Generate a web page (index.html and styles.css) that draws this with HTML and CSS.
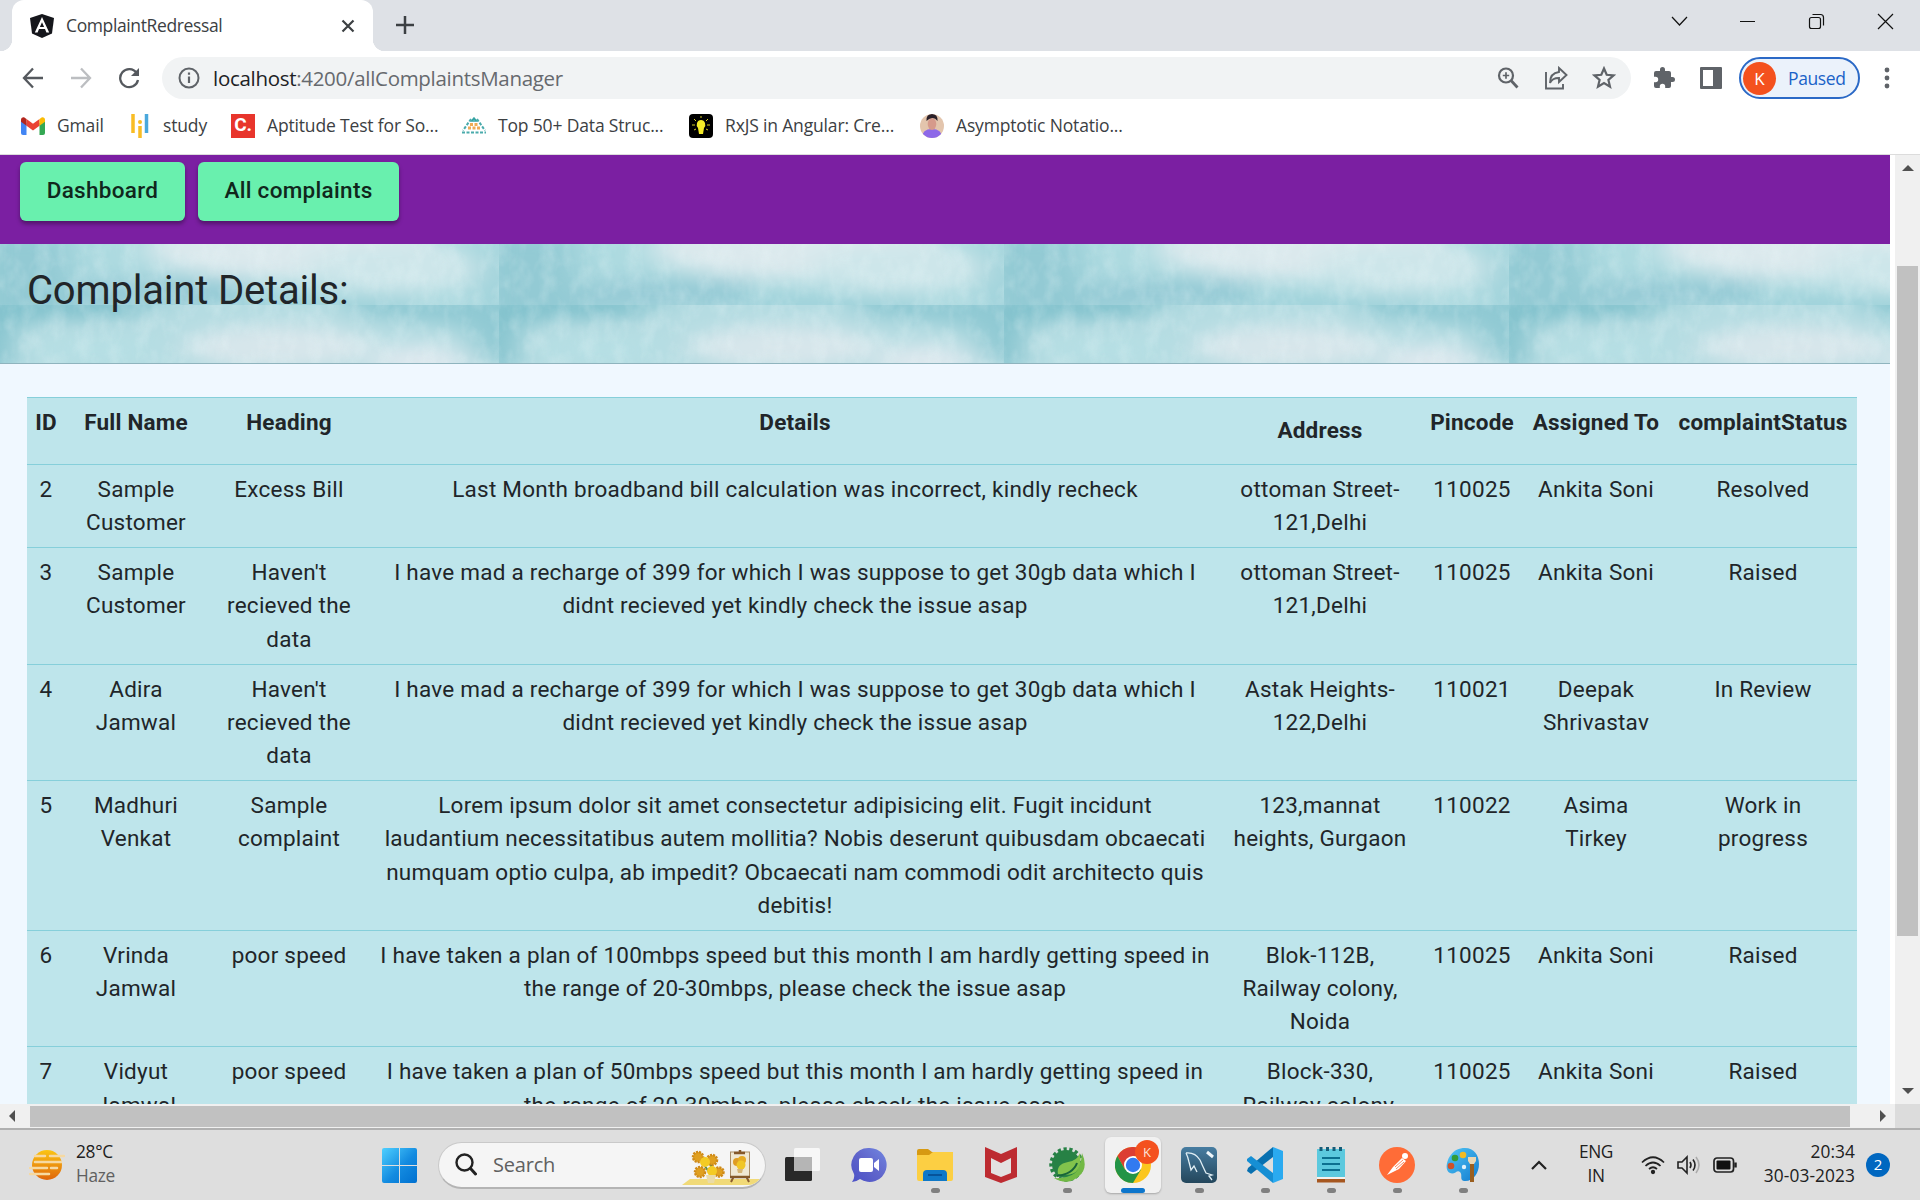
FILE: index.html
```html
<!DOCTYPE html>
<html lang="en">
<head>
<meta charset="utf-8">
<title>ComplaintRedressal</title>
<link rel="stylesheet" href="styles.css">
</head>
<body>
<header class="tabs">
  <div class="tab">
    <svg class="tab-logo" width="24" height="24" viewBox="0 0 24 24"><path d="M12 0l12 4-2 15.500-10 4.500-10-4.500L0 4z" fill="#15161b"/><path d="M12 3L4.800 18.500h2.800L9 15h6l1.400 3.500h2.800zm0 5.300L14.100 13H9.900z" fill="#fff"/></svg>
    <span class="tab-title">ComplaintRedressal</span>
    <svg class="tab-close" width="14" height="14" viewBox="0 0 14 14"><path d="M1.500 1.500l11 11m0-11l-11 11" stroke="#3c4043" stroke-width="2.200"/></svg>
  </div>
  <svg class="tab-new" width="18" height="18" viewBox="0 0 18 18"><path d="M9 0v18M0 9h18" stroke="#3c4043" stroke-width="2.500"/></svg>
  <svg class="win-controls" width="240" height="42" viewBox="0 0 240 42" fill="none" stroke="#111" stroke-width="1.200"><path d="M11 17l7.500 8 7.500-8M79 21.500h15M232 14l-15 15m0-15l15 15"/><rect x="148.500" y="17.500" width="11" height="11" rx="2"/><path d="M151.500 14.500h8q3 0 3 3v8"/></svg>
</header>

<div class="toolbar">
  <svg class="nav-icon" width="22" height="22" viewBox="0 0 22 22"><path d="M21 11H2m9-9.500L2 11l9 9.500" fill="none" stroke="#55595e" stroke-width="2.300"/></svg>
  <svg class="nav-icon" width="22" height="22" viewBox="0 0 22 22"><path d="M1 11h19M11 1.500l9 9.500-9 9.500" fill="none" stroke="#bcbec1" stroke-width="2.300"/></svg>
  <svg class="nav-icon" width="22" height="22" viewBox="0 0 22 22"><path d="M18.600 6A9 9 0 1 0 20 13" fill="none" stroke="#55595e" stroke-width="2.300"/><path d="M21 1v8h-8z" fill="#55595e"/></svg>
  <div class="omnibox">
    <svg width="22" height="22" viewBox="0 0 22 22"><circle cx="11" cy="11" r="9.500" fill="none" stroke="#5f6368" stroke-width="2"/><path d="M11 9.500V16M11 5.500v2.300" stroke="#5f6368" stroke-width="2.200"/></svg>
    <span class="url"><b>localhost</b>:4200/allComplaintsManager</span>
    <svg class="omni-zoom" width="22" height="22" viewBox="0 0 22 22" fill="none" stroke="#5f6368"><circle cx="9" cy="8.500" r="7" stroke-width="2.200"/><path d="M14 13.500l6.500 7" stroke-width="2.800"/><path d="M9 5.300v6.400M5.800 8.500h6.400" stroke-width="1.700"/></svg>
    <svg class="omni-share" width="24" height="24" viewBox="0 0 24 24" fill="none" stroke="#5f6368" stroke-width="1.900"><path d="M2 6v16.500h17V18"/><path d="M15 2l7.500 7-7.500 7v-4q-7 0-9 5 0-10 9-11z"/></svg>
    <svg class="omni-star" width="24" height="24" viewBox="0 0 24 24"><path d="M12 2.500l2.700 6.300 6.900.6-5.200 4.500 1.600 6.700L12 17l-6 3.600 1.600-6.700-5.200-4.500 6.900-.6z" fill="none" stroke="#5f6368" stroke-width="2.200"/></svg>
  </div>
  <svg class="ext" width="24" height="24" viewBox="0 0 24 24"><path d="M20.500 11H19V7a2 2 0 0 0-2-2h-4V3.500a2.500 2.500 0 0 0-5 0V5H4a2 2 0 0 0-2 2v3.800h1.500a2.700 2.700 0 0 1 0 5.400H2V20a2 2 0 0 0 2 2h3.800v-1.500a2.700 2.700 0 0 1 5.400 0V22H17a2 2 0 0 0 2-2v-4h1.500a2.500 2.500 0 0 0 0-5z" fill="#5f6368"/></svg>
  <svg class="panel" width="22" height="22" viewBox="0 0 22 22"><rect width="22" height="22" rx="1" fill="#5f6368"/><rect x="3" y="3" width="10" height="16" fill="#fff"/></svg>
  <div class="profile"><span class="avatar">K</span><span class="paused">Paused</span></div>
  <svg class="dots" width="6" height="22" viewBox="0 0 6 22" fill="#5f6368"><circle cx="3" cy="3" r="2.400"/><circle cx="3" cy="11" r="2.400"/><circle cx="3" cy="19" r="2.400"/></svg>
</div>

<nav class="bookmarks">
  <div class="bm bm1"><svg width="24" height="18" viewBox="0 0 24 18"><path d="M0 3v13q0 2 2 2h3.500V6z" fill="#4285f4"/><path d="M24 3v13q0 2-2 2h-3.500V6z" fill="#34a853"/><path d="M5.500 2v6.800L12 13.500l6.500-4.700V2L12 6.800z" fill="#ea4335"/><path d="M0 3q0-3 3-2.800L5.500 2v6.800L0 4.800z" fill="#b3261e"/><path d="M24 3q0-3-3-2.800L18.500 2v6.800L24 4.800z" fill="#fbbc04"/></svg><span>Gmail</span></div>
  <div class="bm bm2"><svg width="18" height="24" viewBox="0 0 18 24"><path d="M2 0v19M9 12v12" stroke="#f9bd25" stroke-width="3.500"/><circle cx="9" cy="8" r="2" fill="#f9bd25"/><path d="M15.500 0v19" stroke="#4aa8dc" stroke-width="3.500"/></svg><span>study</span></div>
  <div class="bm bm3"><span class="tile-c">C.</span><span>Aptitude Test for So...</span></div>
  <div class="bm bm4"><svg width="24" height="18" viewBox="0 0 24 18"><path d="M12 1l-2.500 3h5z" fill="none" stroke="#35a3a3" stroke-width="1.500"/><path d="M8 7.500h8M6 11h12" stroke="#efaa55" stroke-width="3" stroke-dasharray="3 1.500"/><path d="M9 2L1 13.500M15 2l8 11.500M0 15.500h24" stroke="#4aabac" stroke-width="2" stroke-dasharray="3 1.500"/></svg><span>Top 50+ Data Struc...</span></div>
  <div class="bm bm5"><svg width="24" height="24" viewBox="0 0 24 24"><rect width="24" height="24" rx="4"/><path d="M9 14q-2-2-1-5t4-3 4 3-1 5l-1 6h-4z" fill="#f5ec28"/><path d="M12 2v2M5 5l2 2m12-2l-2 2M3 11h3m12 0h3M5 16l2-1m12 1l-2-1" stroke="#d7cf24"/></svg><span>RxJS in Angular: Cre...</span></div>
  <div class="bm bm6"><svg width="24" height="24" viewBox="0 0 24 24"><defs><clipPath id="face"><circle cx="12" cy="12" r="12"/></clipPath></defs><g clip-path="url(#face)"><rect width="24" height="24" fill="#e3c5ad"/><path d="M2 24q0-9 10-9t10 9z" fill="#8d68e8"/><ellipse cx="12" cy="10" rx="4.300" ry="6" fill="#d69a8b"/><path d="M6.500 7q-.5-7 5.500-7t5.500 7Q15 3.500 12 4T6.500 7z" fill="#2b2029"/></g></svg><span>Asymptotic Notatio...</span></div>
</nav>

<main class="viewport">
  <div class="page">
    <div class="navbar"><button class="btn btn-dash">Dashboard</button><button class="btn btn-all">All complaints</button></div>
    <section class="banner">
      <svg class="banner-art" width="1890" height="119">
        <defs>
          <filter id="soft" x="-50%" y="-50%" width="200%" height="200%"><feGaussianBlur stdDeviation="16 9"/></filter>
          <filter id="grain" x="0" y="0" width="100%" height="100%"><feTurbulence type="fractalNoise" baseFrequency=".07 .045" numOctaves="3" seed="4"/><feColorMatrix values="0 0 0 0 .88  0 0 0 0 .96  0 0 0 0 .97  1.600 0 0 0 -.62"/></filter>
          <pattern id="paint" x="-6" width="505" height="119" patternUnits="userSpaceOnUse">
            <svg width="505" height="61" viewBox="0 0 505 61"><rect width="505" height="61" fill="#addae0"/>
              <g filter="url(#soft)"><path d="M-20-10H70L90 80H-20z" fill="#93cad4"/><path d="M100 35h150v30H70z" fill="#96cbd6"/><ellipse cx="300" cy="5" rx="150" ry="30" fill="#dbe9ed"/><ellipse cx="400" cy="25" rx="90" ry="24" fill="#cde6ea"/><path d="M485 0h30v70h-30zM240 52h180v20H240z" fill="#9fd2da"/></g></svg>
            <svg y="61" width="505" height="58" viewBox="0 0 505 58"><rect width="505" height="58" fill="#b5dce2"/>
              <g filter="url(#soft)"><path d="M-20-10H190L130 12 20 16 10 80h-30z" fill="#80c1cc"/><path d="M350-20H530V60h-35L470 20 360 10z" fill="#8fc9d3"/><ellipse cx="285" cy="42" rx="95" ry="22" fill="#d7e6eb"/><ellipse cx="425" cy="58" rx="50" ry="19" fill="#dce8ee"/><ellipse cx="100" cy="45" rx="65" ry="15" fill="#b6dfe4"/></g></svg>
            <rect width="505" height="119" filter="url(#grain)" opacity=".28"/>
          </pattern>
        </defs>
        <rect width="1890" height="119" fill="url(#paint)"/>
      </svg>
      <h1>Complaint Details:</h1>
    </section>
    <table class="grid">
      <colgroup><col class="c1"><col class="c2"><col class="c3"><col class="c4"><col class="c5"><col class="c6"><col class="c7"><col class="c8"></colgroup>
      <thead><tr><th>ID</th><th>Full Name</th><th>Heading</th><th>Details</th><th class="low">Address</th><th>Pincode</th><th>Assigned To</th><th>complaintStatus</th></tr></thead>
      <tbody>
        <tr><td>2</td><td>Sample<br>Customer</td><td>Excess Bill</td><td>Last Month broadband bill calculation was incorrect, kindly recheck</td><td>ottoman Street-<br>121,Delhi</td><td>110025</td><td>Ankita Soni</td><td>Resolved</td></tr>
        <tr><td>3</td><td>Sample<br>Customer</td><td>Haven't<br>recieved the<br>data</td><td>I have mad a recharge of 399 for which I was suppose to get 30gb data which I<br>didnt recieved yet kindly check the issue asap</td><td>ottoman Street-<br>121,Delhi</td><td>110025</td><td>Ankita Soni</td><td>Raised</td></tr>
        <tr><td>4</td><td>Adira<br>Jamwal</td><td>Haven't<br>recieved the<br>data</td><td>I have mad a recharge of 399 for which I was suppose to get 30gb data which I<br>didnt recieved yet kindly check the issue asap</td><td>Astak Heights-<br>122,Delhi</td><td>110021</td><td>Deepak<br>Shrivastav</td><td>In Review</td></tr>
        <tr><td>5</td><td>Madhuri<br>Venkat</td><td>Sample<br>complaint</td><td>Lorem ipsum dolor sit amet consectetur adipisicing elit. Fugit incidunt<br>laudantium necessitatibus autem mollitia? Nobis deserunt quibusdam obcaecati<br>numquam optio culpa, ab impedit? Obcaecati nam commodi odit architecto quis<br>debitis!</td><td>123,mannat<br>heights, Gurgaon</td><td>110022</td><td>Asima<br>Tirkey</td><td>Work in<br>progress</td></tr>
        <tr><td>6</td><td>Vrinda<br>Jamwal</td><td>poor speed</td><td>I have taken a plan of 100mbps speed but this month I am hardly getting speed in<br>the range of 20-30mbps, please check the issue asap</td><td>Blok-112B,<br>Railway colony,<br>Noida</td><td>110025</td><td>Ankita Soni</td><td>Raised</td></tr>
        <tr><td>7</td><td>Vidyut<br>Jamwal</td><td>poor speed</td><td>I have taken a plan of 50mbps speed but this month I am hardly getting speed in<br>the range of 20-30mbps, please check the issue asap</td><td>Block-330,<br>Railway colony,<br>Noida</td><td>110025</td><td>Ankita Soni</td><td>Raised</td></tr>
      </tbody>
    </table>
  </div>
  <div class="vscroll"><i class="arrow up"></i><div class="vthumb"></div><i class="arrow down"></i></div>
</main>
<div class="hscroll"><i class="arrow left"></i><div class="hthumb"></div><i class="arrow right"></i><div class="corner"></div></div>

<footer class="taskbar">
  <div class="weather">
    <svg width="36" height="32" viewBox="0 0 36 32"><defs><linearGradient id="sun" x2="0" y2="1"><stop stop-color="#fbc513"/><stop offset="1" stop-color="#df650b"/></linearGradient></defs><circle cx="18" cy="16" r="15" fill="url(#sun)"/><path d="M6 7h10m5 0h14M6 13h26M1 19h17m4 0h6M1 25h19" stroke="#f6d9a2" stroke-width="2.500" stroke-linecap="round"/></svg>
    <div class="temp"><span>28°C</span><span class="muted">Haze</span></div>
  </div>
  <svg class="start" width="35" height="35" viewBox="0 0 35 35"><defs><linearGradient id="win" x2="1" y2="1"><stop stop-color="#4fd0ff"/><stop offset=".55" stop-color="#138be0"/><stop offset="1" stop-color="#0070d0"/></linearGradient></defs><path d="M2 0h15v17H0V2q0-2 2-2zM18 0h15q2 0 2 2v15H18zM0 18h17v17H2q-2 0-2-2zM18 18h17v15q0 2-2 2H18z" fill="url(#win)"/></svg>
  <div class="search">
    <svg width="22" height="23" viewBox="0 0 22 23"><circle cx="9.500" cy="9.500" r="8" fill="none" stroke="#222" stroke-width="2.400"/><path d="M15.500 15.500l5 5.500" stroke="#222" stroke-width="3" stroke-linecap="round"/></svg>
    <span>Search</span>
    <svg class="art" width="78" height="40" viewBox="0 0 78 40"><path d="M8 32h70q-5 6-12 6H0z" fill="#f1da78"/><g stroke="#5d8a45" stroke-width="2"><path d="M29 28L18 12M29 28l0-18M29 28l10-5"/></g><g fill="#e0a020" stroke="#cf8a18" stroke-width="2.500" stroke-dasharray="2 1"><circle cx="16" cy="10" r="5"/><circle cx="30" cy="13" r="5"/><circle cx="18" cy="25" r="5"/><circle cx="37" cy="25" r="4.500"/></g><g fill="#f4cb24"><circle cx="23" cy="15" r="5"/><circle cx="30" cy="24" r="5"/></g><path d="M24 28h10l-2 8h-6z" fill="#eadba8"/><path d="M52 29l-3 6m15-6l3 6" stroke="#895b30" stroke-width="2"/><rect x="48.500" y="5" width="19" height="25" fill="#f0e8d3" stroke="#aa8d66"/><path d="M52 6h11M48 30h20M58 3v3" stroke="#855829" stroke-width="2.500"/><circle cx="55" cy="15" r="4" fill="#df9c22"/><circle cx="60" cy="13" r="4" fill="#e6ab24"/><circle cx="59" cy="18" r="4.500" fill="#f0c626"/><path d="M55 22h6l-1 4h-4z" fill="#d6b576"/></svg>
  </div>
  <div class="apps">
    <div class="app"><svg width="36" height="36" viewBox="0 0 36 36"><rect x="0" y="10" width="27" height="24" rx="1.500" fill="#292929"/><rect x="9" y="1" width="26" height="23" rx="1.500" fill="#fafafa" opacity=".9"/><path d="M9 10h18v14H9z" fill="#b5b5b5"/></svg></div>
    <div class="app"><svg width="36" height="36" viewBox="0 0 36 36"><defs><linearGradient id="chat" x1="1" y2="1" x2="0"><stop stop-color="#7287e1"/><stop offset=".5" stop-color="#6065cb"/><stop offset="1" stop-color="#4b51c6"/></linearGradient></defs><path d="M18 1a17 17 0 1 1-9 31Q5 35 1 35q3-4 2-8A17 17 0 0 1 18 1z" fill="url(#chat)"/><rect x="8" y="11" width="14" height="14" rx="2" fill="#fff"/><path d="M23 16l5-4v12l-5-4z" fill="#fff"/></svg></div>
    <div class="app run"><svg width="36" height="36" viewBox="0 0 36 36"><path d="M0 4q0-2 2-2h9l4 3h19q2 0 2 2v5H0z" fill="#d79a12"/><path d="M0 8h12l4-3h20v27q0 2-2 2H2q-2 0-2-2z" fill="#fccf43"/><path d="M6 34V27q0-4 4-4h16q4 0 4 4v7z" fill="#0f78c7"/><path d="M11 28h14" stroke="#06539a" stroke-width="2"/></svg></div>
    <div class="app"><svg width="36" height="36" viewBox="0 0 36 36"><path d="M2 0l16 7L34 0v30l-16 6L2 30z" fill="#bd2b31"/><path d="M8 11l10 5 10-5v15l-10 4-10-4z" fill="#e3e1e1"/></svg></div>
    <div class="app run"><svg width="36" height="36" viewBox="0 0 36 36"><circle cx="17" cy="17" r="14" fill="#278145"/><circle cx="17.500" cy="17.500" r="15.500" fill="none" stroke="#278145" stroke-width="3.500" stroke-dasharray="3.200 2.600"/><path d="M33 6q7 16-4 24-11 9-24 1 13 1 21-5 6-6 7-20z" fill="#72b945"/><path d="M31 6q4 26-22 21-2-10 10-12 9-1 12-9z" fill="#82c34c"/><path d="M8 29q16-2 20-13" fill="none" stroke="#18643a" stroke-width="2"/></svg></div>
    <div class="app run active"><svg width="36" height="36" viewBox="0 0 36 36"><circle cx="18" cy="18" r="18" fill="#fbc61d"/><path d="M2.400 9A18 18 0 0 1 33.600 9H18L10 22.500z" fill="#dc3e32"/><path d="M2.400 9A18 18 0 0 0 18 36l8-13.500H10z" fill="#239447"/><circle cx="18" cy="18" r="9" fill="#fff"/><circle cx="18" cy="18" r="7.200" fill="#327af0"/></svg><span class="app-badge">K</span></div>
    <div class="app run"><svg width="36" height="36" viewBox="0 0 36 36"><defs><linearGradient id="sql" x2="0" y2="1"><stop stop-color="#477da1"/><stop offset="1" stop-color="#24475c"/></linearGradient></defs><rect width="36" height="36" rx="5" fill="url(#sql)"/><path d="M5 6q9-1 14 7 4 9 6 13l6 2-3 1 3 4M5 6q2 4 3 9l2 8 3-4 3 6" fill="none" stroke="#e0eef4" stroke-width="1.300"/><path d="M26 5l6 5" stroke="#edf5fa" stroke-width="3" fill="none"/></svg></div>
    <div class="app run"><svg width="36" height="36" viewBox="0 0 36 36"><path d="M26 0v10L4 27l-4-3 1-3z" fill="#0870b0"/><path d="M0 12l4-3 22 17v10L0 14z" fill="#168fd4"/><path d="M26 0l10 4v28l-10 4z" fill="#2aaaf0"/></svg></div>
    <div class="app run"><svg width="36" height="36" viewBox="0 0 36 36"><path d="M4 2h28v28H4z" fill="#5cc9de"/><path d="M9 11h18M9 17h18M9 23h18" stroke="#0c7090" stroke-width="2"/><path d="M8 0v4m6.500-4v4m6.500-4v4m6.500-4v4" stroke="#155c78" stroke-width="3"/><path d="M4 30h28v2H4z" fill="#f4f2ee"/><path d="M4 32h28v3.500H4z" fill="#a65720"/></svg></div>
    <div class="app run"><svg width="36" height="36" viewBox="0 0 36 36"><circle cx="18" cy="18" r="18" fill="#ff6c37"/><circle cx="26" cy="9" r="3" fill="#fff"/><path d="M23 11l4 3-7 8-12 6 6-8z" fill="#fff"/><path d="M24 13l-8 7m9-5l-8 7" stroke="#ff6c37" stroke-width=".8"/></svg></div>
    <div class="app run"><svg width="36" height="36" viewBox="0 0 36 36"><defs><linearGradient id="pal" x2="1" y2="1"><stop stop-color="#52c7f5"/><stop offset="1" stop-color="#117bd0"/></linearGradient></defs><path d="M20 1c9 0 14 7 14 16s-6 18-15 17c-5-1-1-6-4-9s-5 3-10 1S1 15 5 9s9-8 15-8z" fill="url(#pal)"/><circle cx="10" cy="11" r="3.300" fill="#319c38"/><circle cx="18" cy="8" r="3.300" fill="#f2bb23"/><circle cx="6" cy="19" r="3.300" fill="#cf5128"/><circle cx="19" cy="20" r="2.200" fill="#dff1fb"/><path d="M23 10h8v4l-2 3h-4l-2-3z" fill="#ead7b4"/><path d="M25 17h4v18h-4z" fill="#9a5f20"/></svg></div>
  </div>
  <svg class="chev" width="18" height="12" viewBox="0 0 18 12"><path d="M2 10l7-7 7 7" fill="none" stroke="#222" stroke-width="2.200"/></svg>
  <div class="lang"><span>ENG</span><span>IN</span></div>
  <svg class="wifi" width="24" height="20" viewBox="0 0 24 20" fill="none" stroke="#222" stroke-width="1.700"><path d="M1 7.500q11-10.500 22 0M4.500 11q7.500-7 15 0M8 14q4-3.500 8 0"/><circle cx="12" cy="17" r="1.300" fill="#222"/></svg>
  <svg class="vol" width="24" height="20" viewBox="0 0 24 20" fill="none" stroke="#222" stroke-width="1.600"><path d="M1 7h4l5-5v16l-5-5H1z"/><path d="M13 7q2 3 0 6M16 4.500q4 5.500 0 11"/><path d="M19 2q6 8 0 16" stroke="#aaa"/></svg>
  <svg class="bat" width="24" height="16" viewBox="0 0 24 16"><rect x="1" y="1" width="19.500" height="14" rx="3" fill="none" stroke="#222" stroke-width="1.700"/><rect x="3.500" y="3.500" width="14" height="9" rx="1" fill="#111"/><path d="M22.500 5.500v5" stroke="#222" stroke-width="2.500"/></svg>
  <div class="clock"><span>20:34</span><span>30-03-2023</span></div>
  <span class="count">2</span>
</footer>
</body>
</html>
```
FILE: styles.css
```css
* { box-sizing: border-box; }
body { margin: 0; width: 1920px; height: 1200px; overflow: hidden; background: #fff; font-family: "Open Sans", "Noto Sans", sans-serif; color: #3c4043; display: flex; flex-direction: column; }
svg { display: block; flex: none; }
span { white-space: nowrap; }

/* browser frame */
.tabs { height: 51px; flex: none; background: #dee1e6; display: flex; align-items: flex-start; padding-left: 12px; }
.tab { width: 361px; height: 51px; background: #fff; border-radius: 12px 12px 0 0; display: flex; align-items: center; padding: 0 18px; position: relative; }
.tab::before, .tab::after { content: ""; position: absolute; bottom: 0; width: 12px; height: 12px; }
.tab::before { left: -12px; background: radial-gradient(circle at 0 0, transparent 12px, #fff 12.500px); }
.tab::after { right: -12px; background: radial-gradient(circle at 100% 0, transparent 12px, #fff 12.500px); }
.tab-title { margin-left: 12px; padding-bottom: 2px; font-size: 17.500px; letter-spacing: -.38px; }
.tab-close { margin-left: auto; }
.tab-new { margin: 16px 0 0 23px; }
.win-controls { margin-left: auto; margin-right: 19px; }
.toolbar { height: 54px; flex: none; display: flex; align-items: center; padding-left: 22px; }
.nav-icon { margin-right: 26px; }
.omnibox { width: 1469px; height: 42px; background: #f1f3f4; border-radius: 21px; display: flex; align-items: center; padding-left: 16px; margin-left: -4px; }
.url { margin-left: 13px; font-size: 20.500px; letter-spacing: -.3px; color: #66696e; }
.url b { font-weight: 400; color: #202124; }
.omni-zoom { margin-left: auto; }
.omni-share { margin: 0 24px 0 25px; }
.omni-star { margin-right: 15px; }
.ext { margin-left: 21px; }
.panel { margin-left: 24px; }
.profile { width: 121px; height: 42px; margin-left: 17px; border: 2px solid #2b69c6; border-radius: 21px; background: #ebf2fb; display: flex; align-items: center; padding-left: 2px; }
.avatar { width: 33px; height: 33px; border-radius: 50%; background: #f4511e; color: #fff; font-size: 17px; display: grid; place-items: center; }
.paused { margin-left: 12px; padding-bottom: 1px; font-size: 17.500px; letter-spacing: -.4px; color: #1a62c8; }
.dots { margin-left: 24px; }
.bookmarks { height: 49px; flex: none; display: flex; align-items: center; padding: 0 0 7px 21px; font-size: 17.500px; letter-spacing: -.16px; }
.bm { display: flex; align-items: center; gap: 12px; flex: none; }
.bm > span:last-child { padding-bottom: 2px; }
.bm1 { width: 110px; }
.bm2 { width: 100px; gap: 14px; }
.bm3 { width: 231px; }
.bm4 { width: 227px; }
.bm5 { width: 231px; }
.tile-c { width: 24px; height: 24px; background: #e8352c; color: #fff; font: 700 19px/22px Roboto, sans-serif; text-align: center; }

/* application page */
.viewport { height: 950px; flex: none; display: flex; justify-content: space-between; border-top: 1px solid #dcdcdc; }
.page { width: 1890px; height: 949px; overflow: hidden; background: #f0f8ff; font-family: Roboto, sans-serif; color: #212529; }
.navbar { height: 89px; background: #7b1fa2; padding: 7px 20px; display: flex; gap: 13px; }
.btn { height: 59px; border: 0; border-radius: 6px; background: #69f0ae; color: #10271c; font: 500 22.500px/57px Roboto, sans-serif; letter-spacing: .3px; padding: 0 0 2px; box-shadow: 0 3px 4px rgba(0,0,0,.35); }
.btn-dash { width: 165px; }
.btn-all { width: 201px; }
.banner { height: 120px; position: relative; border-bottom: 1px solid #8fb4be; }
.banner-art { position: absolute; inset: 0; }
.banner h1 { position: relative; margin: 0; padding: 23px 27px 0; font: 400 40px/48px Roboto, sans-serif; letter-spacing: -.18px; }
.grid { width: 1830px; margin: 33px 0 0 27px; table-layout: fixed; border-collapse: collapse; background: #bee5eb; font-size: 22.500px; line-height: 33.150px; letter-spacing: .24px; text-align: center; }
.c1 { width: 38px; } .c2 { width: 142px; } .c3 { width: 164px; } .c4 { width: 848px; }
.c5 { width: 202px; } .c6 { width: 102px; } .c7 { width: 146px; } .c8 { width: 188px; }
.grid th, .grid td { border-top: 1px solid #86cfda; padding: 8px 0; vertical-align: top; white-space: nowrap; }
.grid td { height: 83px; }
.grid th { height: 67px; font-weight: 700; letter-spacing: .2px; }
.grid th.low { padding-top: 16px; }

/* scrollbars */
.vscroll { width: 25px; background: #f0f0f0; display: flex; flex-direction: column; align-items: center; }
.vthumb { width: 21px; height: 670px; margin-top: 95px; background: #c1c1c1; }
.arrow { width: 0; height: 0; border: 6px solid transparent; }
.up { border-top: 0; border-bottom-color: #505050; margin-top: 10px; }
.down { border-bottom: 0; border-top-color: #505050; margin-top: 152px; }
.hscroll { height: 26px; flex: none; background: #f0f0f0; border-bottom: 2px solid #b0b0b0; display: flex; align-items: center; }
.left { border-left: 0; border-right-color: #505050; margin: 0 15px 0 9px; }
.hthumb { width: 1820px; height: 21px; background: #c1c1c1; }
.right { border-right: 0; border-left-color: #505050; margin-left: 30px; }
.corner { width: 25px; height: 24px; margin-left: auto; background: #dcdcdc; }

/* taskbar */
.taskbar { height: 70px; flex: none; display: flex; align-items: center; background: #dedede; color: #202020; font-size: 17.300px; line-height: 24px; }
.weather { width: 382px; padding-left: 29px; display: flex; align-items: center; gap: 11px; }
.temp, .lang, .clock { display: flex; flex-direction: column; padding-bottom: 2px; }
.temp { letter-spacing: -.3px; }
.muted { color: #606060; }
.search { width: 328px; height: 47px; margin-left: 21px; border-radius: 24px; border: 1px solid #c9c9c9; border-bottom: 2px solid #b4b4b4; background: #f5f5f5; display: flex; align-items: center; padding-left: 16px; color: #606060; font-size: 20px; letter-spacing: -.2px; overflow: hidden; }
.search > span { margin-left: 16px; }
.art { margin-left: auto; margin-right: 5px; align-self: flex-end; }
.apps { display: flex; margin-left: 4px; }
.app { width: 66px; height: 56px; display: flex; justify-content: center; padding-top: 10px; position: relative; }
.run::after { content: ""; position: absolute; bottom: 0; left: 29px; width: 9px; height: 5px; border-radius: 3px; background: #808080; }
.active { width: 56px; margin: 0 5px; background: #f1f1f1; border-radius: 6px; box-shadow: 0 1px 2px rgba(0,0,0,.25); }
.active::after { left: 16px; width: 24px; background: #0d76cc; }
.app-badge { position: absolute; left: 30px; top: 3px; width: 24px; height: 24px; border-radius: 50%; background: #f4511e; color: #fbe3da; font-size: 13px; line-height: 24px; text-align: center; }
.chev { margin-left: 34px; }
.lang { width: 50px; margin-left: 23px; text-align: center; letter-spacing: -.4px; }
.wifi { margin-left: 20px; }
.vol { margin-left: 12px; }
.bat { margin-left: 12px; }
.clock { width: 100px; margin-left: 18px; text-align: right; letter-spacing: .1px; }
.count { width: 24px; height: 24px; margin-left: 11px; border-radius: 50%; background: #0067c0; color: #fff; font-size: 15px; line-height: 23px; text-align: center; }
```
